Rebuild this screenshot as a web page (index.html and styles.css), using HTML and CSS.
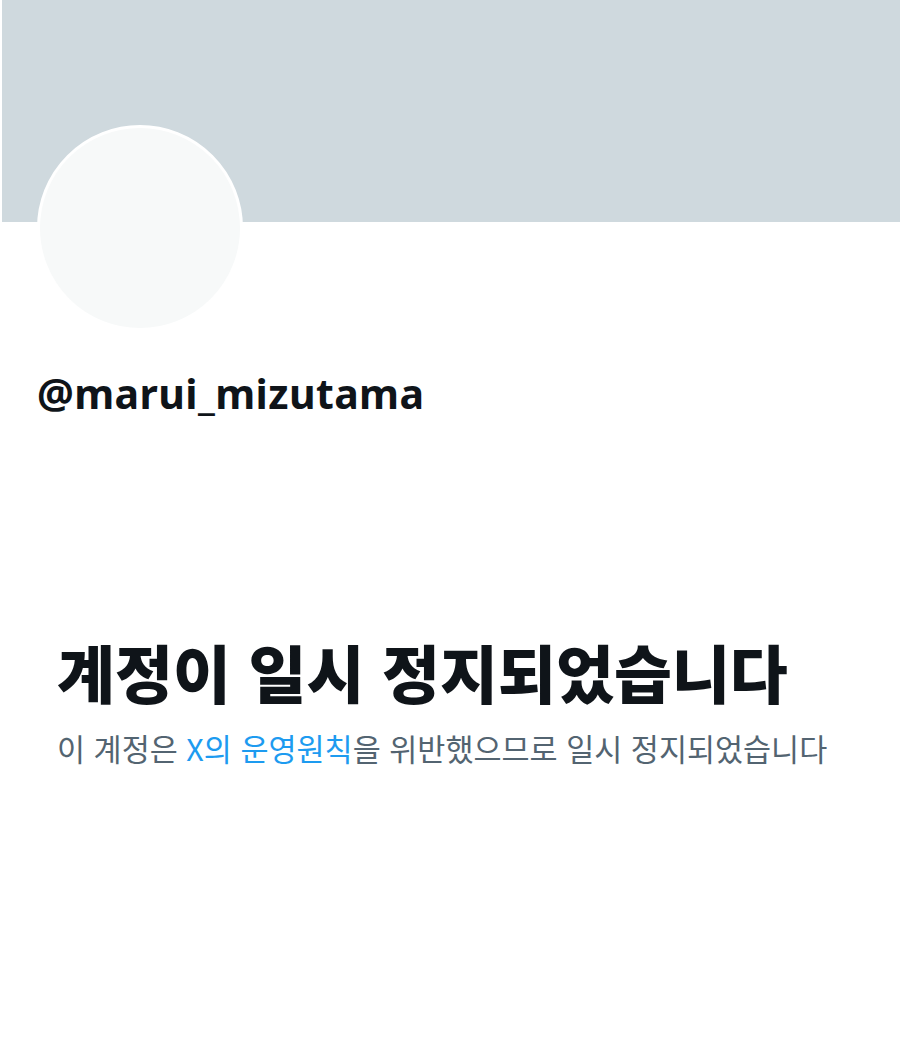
FILE: index.html
```html
<!DOCTYPE html>
<html lang="ko">

<head>
    <meta charset="UTF-8">
    <meta name="viewport" content="width=device-width, initial-scale=1.0">
    <title>@marui_mizutama</title>
    <link rel="stylesheet" href="styles.css">
</head>

<body>
    <div class="banner"></div>
    <div class="profile">
        <div class="avatar"></div>
        <div class="handle">@marui_mizutama</div>
    </div>
    <div class="notice">
        <h1 class="title">계정이 일시 정지되었습니다</h1>
        <p class="desc">이 계정은 <a href="#">X의 운영원칙</a>을 위반했으므로 일시 정지되었습니다</p>
    </div>
</body>

</html>
```

FILE: styles.css
```css
* {
    margin: 0;
    padding: 0;
}

body {
    background: #fff;
    font-family: "Noto Sans", "Noto Sans CJK KR", sans-serif;
    color: #0f1419;
}

.banner {
    height: 222px;
    margin-left: 2px;
    background-color: #cfd9de;
}

.profile {
    padding-left: 37px;
}

.avatar {
    width: 200px;
    height: 200px;
    margin-top: -97px;
    border: 3px solid #fff;
    border-radius: 50%;
    background-color: #f7f9f9;
}

.handle {
    margin-top: 36px;
    font-size: 41px;
    font-weight: 700;
    line-height: 52px;
    letter-spacing: 0.4px;
}

.notice {
    padding: 212px 0 0 57px;
}

.title {
    font-family: "Noto Sans CJK KR", sans-serif;
    font-size: 63px;
    font-weight: 900;
    line-height: 80px;
}

.desc {
    margin-top: 16px;
    font-family: "Noto Sans CJK KR", sans-serif;
    font-size: 30.5px;
    line-height: 42px;
    color: #536471;
}

.desc a {
    color: #1d9bf0;
    text-decoration: none;
}
```
